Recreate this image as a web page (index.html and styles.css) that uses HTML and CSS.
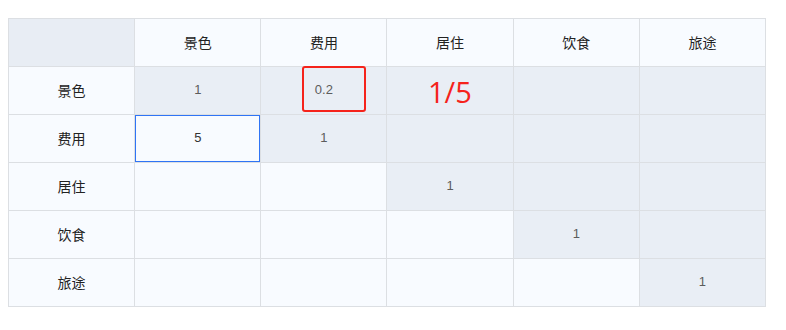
FILE: index.html
```html
<!DOCTYPE html>
<html lang="zh-CN">
<head>
    <meta charset="UTF-8">
    <title>判断矩阵</title>
    <link rel="stylesheet" href="styles.css">
</head>
<body>

    <div class="matrix-wrap">
        <div class="matrix">
            <!-- header row -->
            <div class="cell corner"></div>
            <div class="cell head">景色</div>
            <div class="cell head">费用</div>
            <div class="cell head">居住</div>
            <div class="cell head">饮食</div>
            <div class="cell head">旅途</div>

            <div class="cell head">景色</div>
            <div class="cell upper num">1</div>
            <div class="cell upper num">0.2</div>
            <div class="cell upper"></div>
            <div class="cell upper"></div>
            <div class="cell upper"></div>

            <div class="cell head">费用</div>
            <div class="cell lower num editing">5</div>
            <div class="cell upper num">1</div>
            <div class="cell upper"></div>
            <div class="cell upper"></div>
            <div class="cell upper"></div>

            <div class="cell head">居住</div>
            <div class="cell lower"></div>
            <div class="cell lower"></div>
            <div class="cell upper num">1</div>
            <div class="cell upper"></div>
            <div class="cell upper"></div>

            <div class="cell head">饮食</div>
            <div class="cell lower"></div>
            <div class="cell lower"></div>
            <div class="cell lower"></div>
            <div class="cell upper num">1</div>
            <div class="cell upper"></div>

            <div class="cell head">旅途</div>
            <div class="cell lower"></div>
            <div class="cell lower"></div>
            <div class="cell lower"></div>
            <div class="cell lower"></div>
            <div class="cell upper num">1</div>
        </div>

        <!-- reciprocal note -->
        <div class="mark-box"></div>
        <div class="mark-text">1/5</div>
    </div>

</body>
</html>
```

FILE: styles.css
```css
body {
    margin: 0;
    padding: 18px 8px;
    background: #fff;
    font-family: "Liberation Sans", "Noto Sans CJK SC", sans-serif;
}

.matrix-wrap {
    position: relative;
    width: 758px;
}

.matrix {
    display: grid;
    grid-template-columns: repeat(6, 1fr);
    grid-auto-rows: 47px;
    gap: 1px;
    border: 1px solid #dcdfe3;
    background: #dcdfe3;
}

.cell {
    box-sizing: border-box;
    display: flex;
    justify-content: center;
    align-items: center;
    padding-bottom: 2px;
    font-size: 14px;
    color: #222;
}

.corner {
    background: #e8edf4;
}

.head {
    background: #f8fbff;
}

.upper {
    background: #e9eef5;
}

.lower {
    background: #f8fbff;
}

.num {
    font-size: 13px;
    color: #5c5c5c;
}

.editing {
    border: 1px solid #2f74f5;
    color: #333;
}

.mark-box {
    position: absolute;
    left: 294px;
    top: 48px;
    width: 60px;
    height: 42px;
    border: 2px solid #f5231b;
    border-radius: 3px;
}

.mark-text {
    position: absolute;
    left: 420px;
    top: 54px;
    font-size: 29px;
    color: #f5231b;
    font-family: "Open Sans", "Liberation Sans", sans-serif;
}
```
